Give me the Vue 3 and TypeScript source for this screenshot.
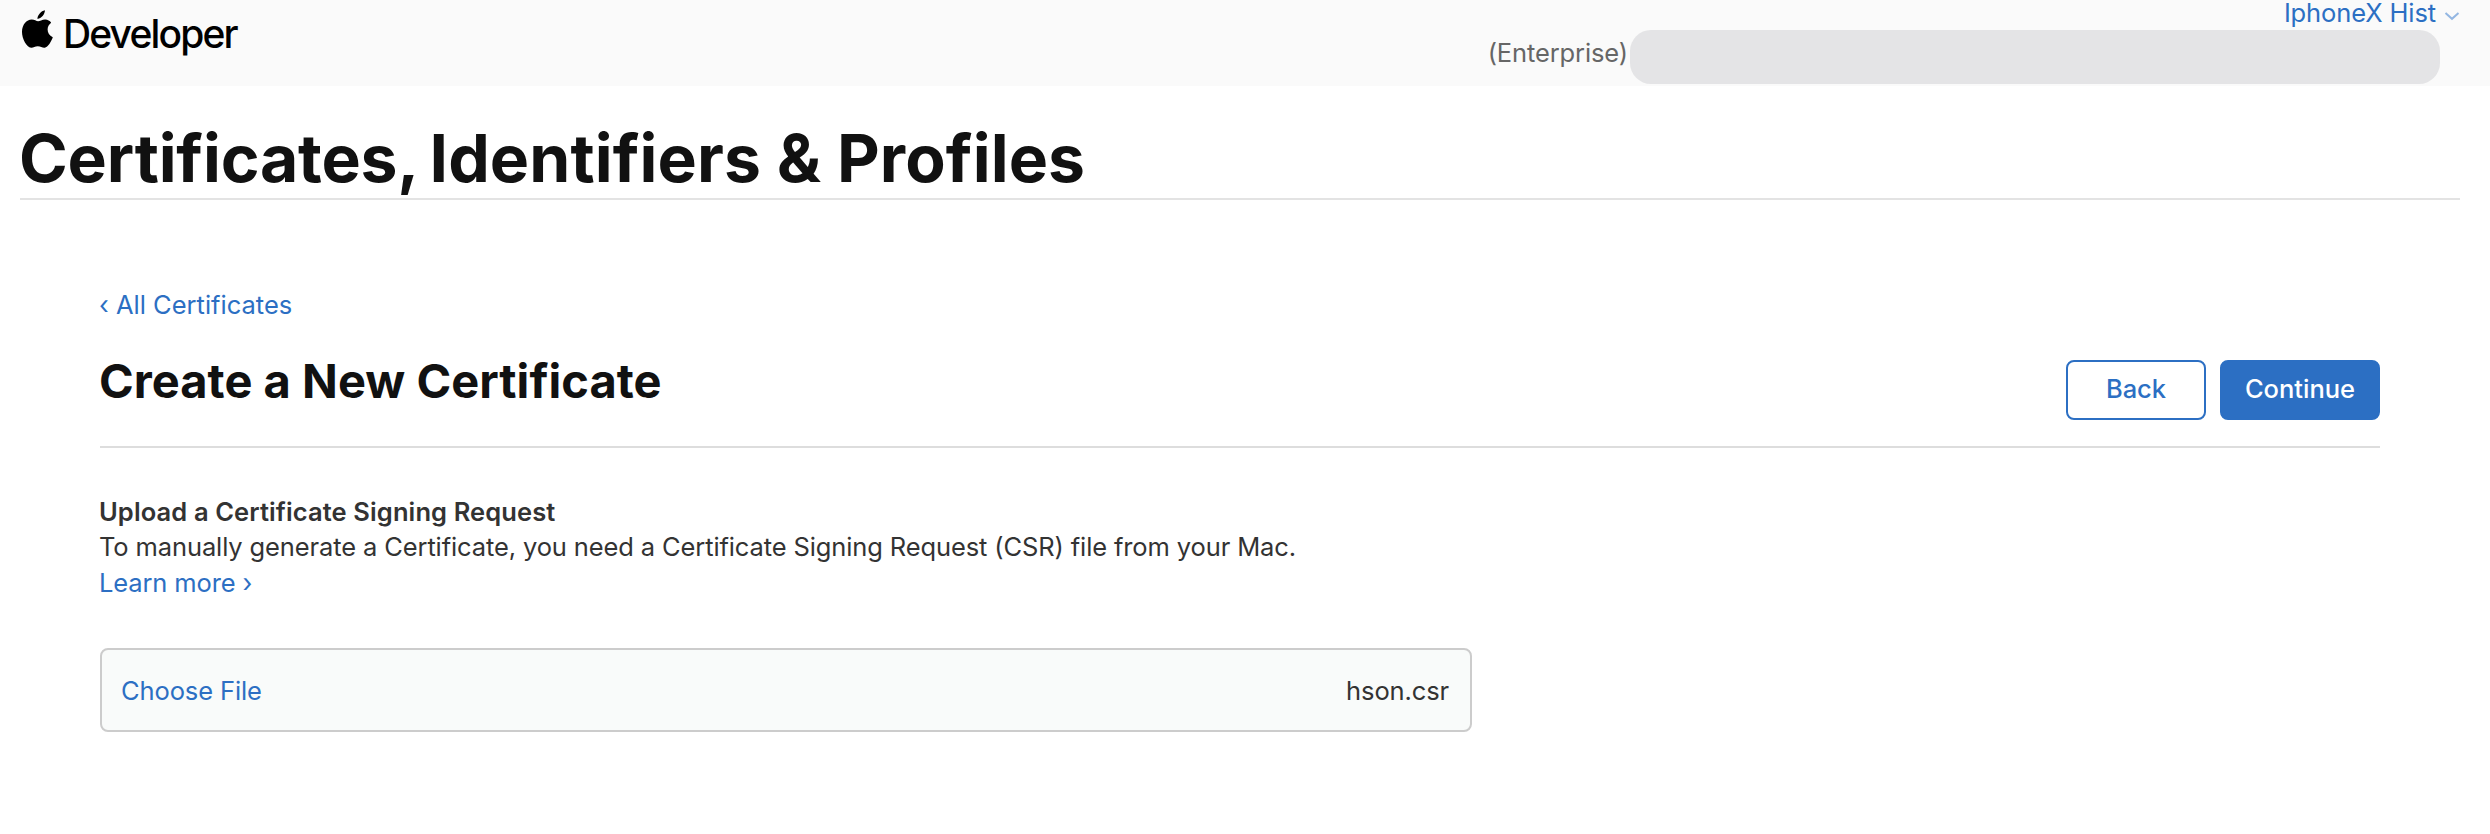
<script setup lang="ts">
const team: string = 'IphoneX Hist'
const fileName: string = 'hson.csr'
</script>

<template>
  <div class="page">
    <header class="topbar">
      <div class="brand">
        <svg class="apple" viewBox="0 0 31 38"><path d="M22.900.2C23.200 3.800 19.500 8.800 15.500 8.900 15.200 5.700 19 .800 22.900.2zM29.200 12.700c-5.300 3.600-4.700 11.800 1.600 14.500-1.500 4.300-4.800 9.900-8.100 10.600-2.300.3-3.900-1.500-6.900-1.500s-4.500 1.700-6.700 1.500C4.500 37.400 0 28.900 0 22.100 0 14.600 4.600 9.600 9.700 9.600c2.700 0 4.700 1.700 6.400 1.700 1.700 0 4.200-1.900 7.200-1.800 2.400.1 4.500 1.200 5.900 3.200z"/></svg>
        <span class="brand-name">Developer</span>
      </div>
      <div class="account">
        <div class="team"><span>{{ team }}</span><svg viewBox="0 0 16 10"><path d="M1.500 2l6.500 5.800L14.500 2"/></svg></div>
        <div class="org"><span>(Enterprise)</span><div class="redacted"></div></div>
      </div>
    </header>
    <h1><span class="lead">Certificates, </span><span>Identifiers &amp; Profiles</span></h1>
    <main>
      <a class="crumb"><span>‹ All Certificates</span></a>
      <div class="titlebar">
        <h2><span>Create a New Certificate</span></h2>
        <div class="actions"><button class="back">Back</button><button class="continue">Continue</button></div>
      </div>
      <section class="intro">
        <h3><span>Upload a Certificate Signing Request</span></h3>
        <p><span>To manually generate a Certificate, you need a Certificate Signing Request (CSR) file from your Mac.</span></p>
        <a><span>Learn more ›</span></a>
      </section>
      <div class="file"><a>Choose File</a><span>{{ fileName }}</span></div>
    </main>
  </div>
</template>

<style>
body { margin: 0; background: #fff; }
</style>
<style scoped>
.page { height: 834px; box-sizing: border-box; font-family: Inter, "Liberation Sans", sans-serif; color: #333; font-size: 25.5px; letter-spacing: -.12px; }
.topbar { height: 86px; background: #fafafa; display: flex; justify-content: space-between; }
.brand { display: flex; align-items: flex-start; padding: 10px 0 0 22px; color: #000; }
.apple { width: 31px; height: 38px; }
.brand-name { font-size: 39px; line-height: 48px; font-weight: 500; letter-spacing: -1.85px; margin-left: 10px; }
.account { display: flex; flex-direction: column; align-items: flex-end; }
.team { height: 26px; margin-bottom: 4px; line-height: 26px; color: #2c6fc3; margin-right: 30px; display: flex; align-items: center; gap: 8px; }
.team svg { width: 16px; height: 10px; margin-top: 5px; fill: none; stroke: #94b7e2; stroke-width: 2; }
.org { display: flex; color: #666; line-height: 46px; margin-right: 50px; }
.redacted { width: 810px; height: 54px; border-radius: 21px; background: #e4e4e6; margin-left: 2px; }
h1 { margin: 30px 30px 0 20px; height: 82px; border-bottom: 2px solid #e3e3e3; font-size: 66px; line-height: 84px; color: #111; letter-spacing: .1px; text-indent: -1px; }
.lead { letter-spacing: -.2px; word-spacing: -3px; }
main { padding: 84px 110px 0 100px; }
a { color: #2c6fc3; display: block; }
.crumb { height: 44px; line-height: 42px; text-indent: -1px; letter-spacing: 0; }
.titlebar { display: flex; justify-content: space-between; height: 118px; border-bottom: 2px solid #ddd; }
h2 { margin: 25px 0 0 -1px; font-size: 47px; line-height: 56px; color: #111; letter-spacing: .03px; }
.actions { display: flex; gap: 14px; padding-top: 32px; }
button { height: 60px; border: 2px solid #2c6fc3; border-radius: 8px; font: 500 25.5px Inter, sans-serif; letter-spacing: 0; color: #2c6fc3; background: #fff; padding: 0 0 3px; }
.back { width: 140px; }
.continue { width: 160px; background: #2c6fc3; color: #fff; }
.intro { padding-top: 46px; line-height: 36px; margin-left: -1px; }
h3 { margin: 0; font-size: 25.5px; font-weight: 600; letter-spacing: .11px; }
p { margin: 0 0 1px; line-height: 34px; }
.file { margin-top: 47px; width: 1372px; height: 84px; box-sizing: border-box; border: 2px solid #ccc; border-radius: 8px; background: #f9fbfa; display: flex; align-items: center; justify-content: space-between; padding: 0 21px 0 19px; }
</style>
